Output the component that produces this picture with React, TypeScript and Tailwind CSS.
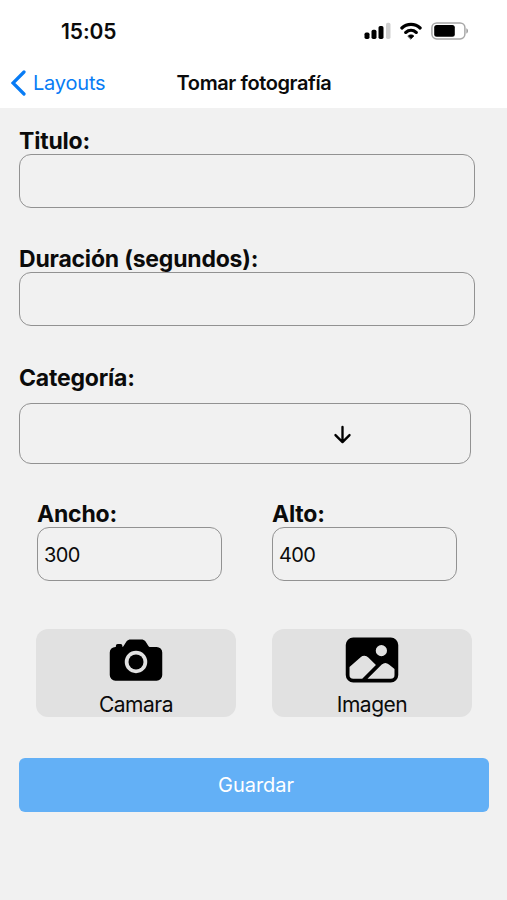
/**
 * Pantalla para tomar una fotografía
 * Formulario con los datos del layout y accesos a la cámara y a la galería
 */

import { useState } from 'react';
import type { ReactNode } from 'react';
import { IoArrowDown, IoCamera, IoImage } from 'react-icons/io5';

interface FieldProps {
  label: string;
  value: string;
  onChange: (value: string) => void;
}

/**
 * Campo de texto con su etiqueta
 */
function Field({ label, value, onChange }: FieldProps) {
  return (
    <label className="block">
      <span className="block h-7 whitespace-nowrap pt-px text-[23px] leading-7 font-bold tracking-[-0.2px]">{label}</span>
      <input
        type="text"
        value={value}
        onChange={(e) => onChange(e.target.value)}
        className="block h-[54px] w-full rounded-xl border border-[#929292] bg-transparent px-1.5 pt-0.5 text-[20px] tracking-[-0.6px] outline-none"
      />
    </label>
  );
}

/**
 * Botón gris con icono y texto
 */
function MediaButton({ label, children }: { label: string; children: ReactNode }) {
  return (
    <button
      type="button"
      className="flex h-[88px] w-[200px] flex-col items-center rounded-xl bg-[#e1e1e1] pt-px text-[21px] leading-[30px] tracking-[-0.5px]"
    >
      {children}
      {label}
    </button>
  );
}

/**
 * Barra de estado del teléfono
 */
function StatusBar() {
  return (
    <div className="flex h-[58px] items-center justify-between pt-1 pr-[38px] pl-[61px]">
      <span className="pt-px text-[21px] font-semibold tracking-[-0.1px]">15:05</span>
      <div className="flex items-center gap-[9px]">
        <svg width="27" height="18" viewBox="0 0 27 18">
          <rect x="0.5" y="10.5" width="5" height="6.5" rx="1.7" />
          <rect x="7.5" y="7.8" width="5" height="9.2" rx="1.7" />
          <rect x="14.5" y="4" width="5" height="13" rx="1.7" />
          <rect x="22" y="0.8" width="4.5" height="16.2" rx="1.7" fill="#cfcfcf" />
        </svg>
        <svg width="22" height="18" viewBox="0 0 22 18" fill="none" stroke="#000" strokeWidth="3.2" strokeLinecap="round">
          <path d="M1.9 6C7 1.2 15 1.2 20.1 6" />
          <path d="M5.7 10.4C8.8 7.8 13.2 7.8 16.3 10.4" />
          <path d="M8 14C9.7 12.3 12.3 12.3 14 14L11 16.9Z" fill="#000" strokeWidth="0.6" strokeLinejoin="round" />
        </svg>
        <svg width="38" height="18" viewBox="0 0 38 18">
          <rect x="0.9" y="0.9" width="33" height="16" rx="4.8" fill="none" stroke="#a8a8a8" strokeWidth="1.5" />
          <rect x="3.2" y="3" width="20.6" height="11.8" rx="2.5" />
          <path d="M35.3 6.2C37.6 7 37.6 10.8 35.3 11.6Z" fill="#a0a0a0" />
        </svg>
      </div>
    </div>
  );
}

/**
 * Componente principal de la pantalla
 */
export default function App() {
  // Estado del formulario
  const [title, setTitle] = useState('');
  const [duration, setDuration] = useState('');
  const [width, setWidth] = useState('300');
  const [height, setHeight] = useState('400');

  return (
    <div className="h-[900px] w-[507px] overflow-hidden bg-[#f1f1f1] font-['Inter',sans-serif] text-[#0b0b0b]">
      {/* Encabezado con navegación */}
      <header className="h-[108px] bg-white">
        <StatusBar />
        <nav className="grid h-[50px] grid-cols-[1fr_auto_1fr] items-center px-[11px]">
          <button type="button" className="flex items-center gap-[7px] text-[20px] tracking-[-0.2px] text-[#087cf5]">
            <svg width="15" height="26" viewBox="0 0 15 26" fill="none" stroke="currentColor" strokeWidth="3.2" strokeLinecap="round">
              <path d="M13 2L2 13L13 24" />
            </svg>
            Layouts
          </button>
          <h1 className="pl-px text-[20px] font-semibold tracking-[-0.4px]">Tomar fotografía</h1>
        </nav>
      </header>

      <form className="pt-[18px] pr-[18px] pl-[19px]">
        <div className="flex w-[456px] flex-col gap-9">
          <Field label="Titulo:" value={title} onChange={setTitle} />
          <Field label="Duración (segundos):" value={duration} onChange={setDuration} />
        </div>

        {/* Selector de categoría */}
        <div className="mt-[37px] w-[452px]">
          <span className="block h-10 pt-px text-[23px] leading-7 font-bold tracking-[-0.2px]">Categoría:</span>
          <button
            type="button"
            className="flex h-[61px] w-full items-center justify-end rounded-xl border border-[#929292] pt-0.5 pr-[115px] text-black"
          >
            <IoArrowDown size={25} />
          </button>
        </div>

        {/* Dimensiones */}
        <div className="mt-[35px] grid grid-cols-[185px_185px] gap-x-[50px] pl-[18px]">
          <Field label="Ancho:" value={width} onChange={setWidth} />
          <Field label="Alto:" value={height} onChange={setHeight} />
        </div>

        {/* Origen de la imagen */}
        <div className="mt-12 flex gap-9 pl-[17px]">
          <MediaButton label="Camara">
            <IoCamera size={60} className="shrink-0 text-black" />
          </MediaButton>
          <MediaButton label="Imagen">
            <IoImage size={60} className="shrink-0 text-black" />
          </MediaButton>
        </div>

        <button
          type="button"
          className="mt-[41px] h-[54px] w-full rounded-md bg-[#63b0f6] pl-1 text-[20px] tracking-[-0.05px] text-white"
        >
          Guardar
        </button>
      </form>
    </div>
  );
}
